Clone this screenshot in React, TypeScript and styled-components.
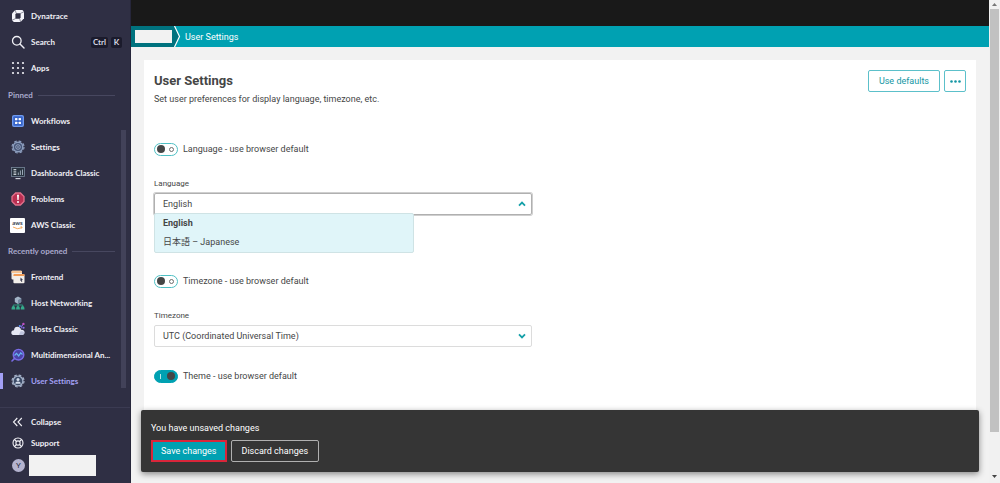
import React from 'react';
import styled, { createGlobalStyle } from 'styled-components';

const teal = '#00a1b2';

const Global = createGlobalStyle`
  *, *::before, *::after { box-sizing: border-box; }
  body { margin: 0; }
  body, button, select { font-family: Roboto, "Noto Sans CJK JP", sans-serif; }
`;

const Shell = styled.div`
  display: flex;
  min-height: 100vh;
  background: #f2f2f2;
  color: #454646;
  font-size: 9px;
`;

/* ---------- Sidebar ---------- */

const Sidebar = styled.aside`
  flex: 0 0 131px;
  display: flex;
  flex-direction: column;
  padding-top: 3px;
  background: #2f2f44;
  border-right: 1px solid #26263a;
`;

const NavLink = styled.a<{ $active?: boolean; $height?: number }>`
  display: flex;
  align-items: center;
  gap: 6px;
  height: ${(p) => p.$height ?? 26}px;
  padding: 0 8px 0 ${(p) => (p.$active ? 8 : 11)}px;
  border-left: ${(p) => (p.$active ? '3px solid #a3a0f5' : '0')};
  border-image: ${(p) =>
    p.$active
      ? 'linear-gradient(transparent 20%, #a3a0f5 20%, #a3a0f5 80%, transparent 80%) 1'
      : 'none'};
  color: ${(p) => (p.$active ? '#a3a0f5' : '#f0f0f5')};
  font-family: Lato, sans-serif;
  font-variant-ligatures: none;
  font-size: 8px;
  font-weight: 700;
  text-decoration: none;
  white-space: nowrap;
  svg { flex: none; }
`;

const Keys = styled.span`
  display: flex;
  gap: 3px;
  margin-left: auto;
`;

const Key = styled.kbd`
  padding: 0 2px;
  min-width: 11px;
  text-align: center;
  border-radius: 2px;
  background: #1b1b2c;
  color: #d5d5e2;
  font-family: inherit;
  line-height: 11px;
`;

const ScrollArea = styled.div`
  display: flex;
`;

const NavList = styled.nav`
  flex: 1;
  min-width: 0;
`;

const Track = styled.div`
  display: flex;
  flex: 0 0 5px;
  margin-right: 4px;
  padding: 48px 0 6px;
`;

const Thumb = styled.div`
  flex: 1;
  background: #424259;
`;

const NavGroup = styled.div`
  padding-bottom: 1px;
`;

const GroupTitle = styled.h2`
  display: flex;
  align-items: center;
  gap: 5px;
  height: 26px;
  margin: 0;
  padding: 0 6px 0 8px;
  color: #a9a9cc;
  font-family: Lato, sans-serif;
  font-size: 8px;
  font-weight: 700;
  white-space: nowrap;
  &::after {
    content: '';
    flex: 1;
    height: 1px;
    background: #47475f;
  }
`;

const SidebarFooter = styled.div`
  margin-top: auto;
  padding: 3px 0 7px;
  border-top: 1px solid #3b3b52;
`;

const Account = styled.div`
  display: flex;
  align-items: center;
  gap: 4px;
  padding: 2px 0 0 12px;
`;

const Avatar = styled.span`
  width: 13px;
  height: 13px;
  border-radius: 50%;
  background: #b4b3cf;
  color: #2f2f44;
  font-size: 8px;
  line-height: 13px;
  text-align: center;
`;

const AccountName = styled.span`
  width: 67px;
  height: 21px;
  background: #f2f2f2;
`;

/* ---------- Main area ---------- */

const Main = styled.main`
  flex: 1;
  min-width: 0;
  display: flex;
  flex-direction: column;
`;

const TopBar = styled.header`
  height: 26px;
  background: #191919;
`;

const Breadcrumbs = styled.nav`
  display: flex;
  align-items: center;
  height: 21px;
  background: ${teal};
  a { color: #fff; font-size: 9px; text-decoration: none; }
`;

const Crumb = styled.span`
  display: flex;
  align-items: center;
  height: 21px;
  padding-left: 4px;
  background: #00727e;
`;

const CrumbName = styled.span`
  width: 37px;
  height: 13px;
  background: #f2f2f2;
`;

const CrumbArrow = styled.svg`
  margin-right: 4px;
`;

const Content = styled.div`
  flex: 1;
  display: flex;
  flex-direction: column;
  padding: 13px 10px 11px;
`;

const Card = styled.section`
  flex: 1;
  margin: 0 3px;
  padding: 10px;
  background: #fff;
`;

const CardHeader = styled.div`
  display: flex;
  align-items: flex-start;
  gap: 4px;
  margin-bottom: 34px;
`;

const Heading = styled.div`
  flex: 1;
  padding-top: 1px;
`;

const Title = styled.h1`
  margin: 0;
  font-size: 13px;
  font-weight: 700;
  line-height: 20px;
`;

const Subtitle = styled.p`
  margin: 0;
  font-size: 9px;
  line-height: 16px;
`;

const Button = styled.button<{ $tone: 'outline' | 'primary' | 'dark' }>`
  display: flex;
  align-items: center;
  justify-content: center;
  height: 22px;
  padding: 0 10px;
  border: 1px solid ${(p) => (p.$tone === 'outline' ? '#5cc0ca' : '#b0b0b0')};
  border-radius: 2px;
  background: ${(p) => (p.$tone === 'outline' ? '#fff' : p.$tone === 'primary' ? teal : '#353535')};
  color: ${(p) => (p.$tone === 'outline' ? '#1496a4' : '#fff')};
  font-size: 9px;
`;

const SaveButton = styled(Button)`
  padding: 0 8px;
  border: 2px solid #d9263a;
  border-radius: 0;
`;

const MoreButton = styled(Button)`
  width: 22px;
  padding: 0;
`;

const ToggleRow = styled.label`
  display: flex;
  align-items: center;
  gap: 5px;
  height: 16px;
  font-size: 9px;
`;

const Toggle = styled.input`
  appearance: none;
  display: flex;
  align-items: center;
  justify-content: space-between;
  width: 24px;
  height: 13px;
  margin: 0;
  padding: 0 3px 0 2px;
  border: 1px solid #4fc0c4;
  border-radius: 7px;
  background: #fff;
  &::before {
    content: '';
    width: 8px;
    height: 8px;
    border-radius: 50%;
    background: #454646;
  }
  &::after {
    content: '';
    width: 5px;
    height: 5px;
    border: 1px solid #6d6d6d;
    border-radius: 50%;
  }
  &:checked {
    flex-direction: row-reverse;
    padding: 0 2px 0 5px;
    border-color: ${teal};
    background: ${teal};
  }
  &:checked::after {
    width: 1px;
    border: 0;
    border-radius: 0;
    background: #b9e6ea;
  }
`;

const Field = styled.div`
  position: relative;
  width: 378px;
  max-width: 100%;
  margin: 20px 0;
`;

const FieldLabel = styled.label`
  display: block;
  height: 16px;
  font-size: 8px;
  line-height: 14px;
`;

const SelectBox = styled.div<{ $open?: boolean }>`
  display: grid;
  align-items: center;
  border-radius: 2px;
  box-shadow: ${(p) => (p.$open ? '0 0 0 1px #cfcfcf' : 'none')};
  > * { grid-area: 1 / 1; }
  > svg { justify-self: end; margin-right: 6px; pointer-events: none; }
  select { border-color: ${(p) => (p.$open ? '#b0b0b0' : '#dcdcdc')}; }
`;

const Select = styled.select`
  appearance: none;
  width: 100%;
  height: 22px;
  padding: 0 8px;
  border: 1px solid;
  border-radius: 2px;
  background: #fff;
  color: #454646;
  font-size: 9px;
`;

const Group = styled.div<{ $space: number }>`
  padding-bottom: ${(p) => p.$space}px;
`;

const OptionList = styled.ul`
  position: absolute;
  top: 36px;
  left: 0;
  width: 260px;
  margin: 0;
  padding: 0;
  border: 1px solid #cfe3e5;
  border-radius: 2px;
  background: #e0f5f9;
  list-style: none;
`;

const OptionItem = styled.li`
  height: 19px;
  padding: 0 8px;
  font-size: 9px;
  line-height: 19px;
  &[aria-selected='true'] { font-weight: 700; }
`;

const SaveBar = styled.section`
  padding: 10px;
  border-radius: 2px;
  background: #353535;
  box-shadow: 0 2px 6px rgba(0, 0, 0, 0.45);
  color: #fff;
`;

const SaveText = styled.p`
  margin: 0 0 4px;
  font-size: 9px;
  line-height: 16px;
`;

const Actions = styled.div`
  display: flex;
  gap: 4px;
`;

/* ---------- Page scroll bar ---------- */

const PageScroll = styled.div`
  flex: 0 0 11px;
  display: flex;
  flex-direction: column;
  align-items: center;
  justify-content: space-between;
  background: #f1f1f1;
`;

const PageThumb = styled.div`
  flex: 1;
  width: 9px;
  margin-bottom: 40px;
  background: #c1c1c1;
`;

/* ---------- Icons ---------- */

const Svg = ({ children, size = 14 }: { children: React.ReactNode; size?: number }) => (
  <svg width={size} height={size} viewBox="0 0 14 14" fill="none" aria-hidden="true">
    {children}
  </svg>
);

const LogoIcon = () => (
  <Svg>
    <path d="M4.2 1h7.2L13 2.8v6.4L9.6 13H2.8L1 11.2V4.6z" fill="#f4f4fa" />
    <path d="M5.2 4.3h4.4v4.2l-.9 1.2H4.4V5.4z" fill="#2f2f44" />
    <path d="M4.2 1l1 3.3M13 2.8L9.6 4.3M9.6 13l-.9-3.3M1 11.2l3.4-1.5" stroke="#2f2f44" strokeWidth=".5" />
  </Svg>
);

const SearchIcon = () => (
  <Svg>
    <circle cx="5.8" cy="5.8" r="4.3" stroke="#f0f0f5" strokeWidth="1.3" />
    <path d="M9 9l4 4" stroke="#f0f0f5" strokeWidth="1.4" strokeLinecap="round" />
  </Svg>
);

const AppsIcon = () => (
  <Svg>
    {[2, 7, 12].map((y) => [2, 7, 12].map((x) => <circle key={`${x}-${y}`} cx={x} cy={y} r="1.1" fill="#f0f0f5" />))}
  </Svg>
);

const WorkflowsIcon = () => (
  <Svg>
    <rect x="1" y="1" width="12" height="12" rx="2" fill="#6f9bf0" />
    <rect x="2.3" y="2.3" width="9.4" height="9.4" rx="1" fill="#3764c8" />
    {[4, 7.8].map((y) => [4, 7.8].map((x) => <rect key={`${x}-${y}`} x={x} y={y} width="2.2" height="2.2" rx=".5" fill="#fff" />))}
    <path d="M6.2 5.1h1.6M6.2 8.9h1.6" stroke="#fff" strokeWidth=".6" />
  </Svg>
);

const SettingsIcon = () => (
  <Svg>
    <circle cx="7" cy="7" r="6" stroke="#8c9dbd" strokeWidth="1.2" strokeDasharray="2.7 2.01" />
    <circle cx="7" cy="7" r="4.8" fill="#465577" stroke="#8c9dbd" strokeWidth="1.4" />
    <circle cx="7" cy="7" r="2.3" stroke="#a7b5d0" strokeWidth=".8" />
    <circle cx="7" cy="7" r=".8" fill="#a7b5d0" />
  </Svg>
);

const DashboardIcon = () => (
  <Svg>
    <rect x=".5" y="1.5" width="13" height="9" fill="#29333f" stroke="#77879a" strokeWidth=".8" />
    <path d="M2.5 3.5h2.8M2.5 5.2h2.8M2.5 7h2.8M2.5 8.5h2.8" stroke="#d6dbe2" strokeWidth=".9" />
    <path d="M7.3 9V6.5M9.4 9V4.5M11.5 9V3.5" stroke="#99a7b5" strokeWidth="1" />
    <path d="M4.5 12.6h5" stroke="#d6dbe2" strokeWidth="1.1" />
  </Svg>
);

const ProblemsIcon = () => (
  <Svg>
    <path d="M4.6 1h4.8L13 4.6v4.8L9.4 13H4.6L1 9.4V4.6z" fill="#b92f52" stroke="#e2728c" strokeWidth="1.3" />
    <path d="M6 2.8h2L7.6 8H6.4z" fill="#fff" />
    <circle cx="7" cy="10" r="1" fill="#fff" />
  </Svg>
);

const AwsLogo = styled.span`
  display: flex;
  flex-direction: column;
  align-items: center;
  justify-content: center;
  width: 15px;
  height: 15px;
  margin: 0 0 0 -1px;
  border-radius: 1px;
  background: #fff;
  color: #35404e;
  font-size: 6px;
  line-height: 6px;
`;

const AwsIcon = () => (
  <AwsLogo>
    aws
    <svg width="11" height="4" viewBox="0 0 11 4" fill="none" aria-hidden="true">
      <path d="M1 1q4.5 3 8.6.8M8.6.8l1.5.2-.5 1.4" stroke="#f5a04a" strokeWidth=".9" />
    </svg>
  </AwsLogo>
);

const FrontendIcon = () => (
  <Svg>
    <rect x=".5" y=".8" width="10.5" height="8.8" rx="1" fill="#f2ede6" />
    <path d="M.5 3V1.8q0-1 1-1h8.5q1 0 1 1V3z" fill="#f6c596" />
    <rect x="2.4" y="4" width="11.1" height="9.2" rx="1" fill="#f3efeb" />
    <path d="M2.4 6V5q0-1 1-1h9.1q1 0 1 1v1z" fill="#f19a55" />
    <path d="M9.6 7.5l2.4 2.6-1.2.1.5 1.6-.9.2-.4-1.5-.8.6z" fill="#3b3b50" />
  </Svg>
);

const NetworkIcon = () => (
  <Svg>
    <path d="M7 .6l3.2 1.7v3.8L7 7.9 3.8 6.1V2.3z" fill="#a3b4c7" />
    <path d="M7 4.1l3.2-1.8v3.8L7 7.9z" fill="#71879f" />
    <path d="M7 8v2.5M2.3 10.5V9h9.4v1.5" stroke="#2f9f83" strokeWidth=".9" />
    <path d="M.5 13.4q0-3.4 1.9-3.4t1.9 3.4zM5.1 13.4q0-3.4 1.9-3.4t1.9 3.4zM9.7 13.4q0-3.4 1.9-3.4t1.9 3.4z" fill="#35ab8c" />
  </Svg>
);

const HostsIcon = () => (
  <Svg>
    <path d="M3 13q-2.7 0-2.7-2.3T3 8.2q.3-3.4 3.4-3.4t3.6 2.9q3.5-.2 3.5 2.6T10.6 13z" fill="#e6e8f4" />
    <path d="M9.6 9.3q2.2-.5 3.8.9-.1 2.8-2.7 2.8H7.8z" fill="#bfc5de" />
    <path d="M8.8 4.2h2v2.2M10.8 4.2L12.6 2" stroke="#8a6de8" strokeWidth="1" />
    <circle cx="8.7" cy="4" r="1" fill="#5b8def" />
    <circle cx="12.4" cy="1.9" r="1.2" fill="#c04fc2" />
    <circle cx="12.6" cy="5.8" r="1" fill="#8a6de8" />
  </Svg>
);

const AnalysisIcon = () => (
  <Svg>
    <path d="M3.6 10.4L1 13" stroke="#7a6be6" strokeWidth="1.6" strokeLinecap="round" />
    <circle cx="7.5" cy="6.7" r="5.3" fill="#4a44a5" stroke="#7a6be6" strokeWidth="1.4" />
    <path d="M3.5 7.5l2-2.2 2.2 2.6 2-3 1.8 1.6" stroke="#67b4f2" strokeWidth="1.2" />
  </Svg>
);

const UserSettingsIcon = () => (
  <Svg>
    <circle cx="7" cy="7" r="6" stroke="#a4b1c8" strokeWidth="1.2" strokeDasharray="2.7 2.01" />
    <circle cx="7" cy="7" r="4.9" fill="#3b4a66" stroke="#a4b1c8" strokeWidth="1.3" />
    <circle cx="7" cy="5.4" r="1.5" fill="#d3dbea" />
    <path d="M4.3 9.8q0-2.4 2.7-2.4t2.7 2.4z" fill="#d3dbea" />
  </Svg>
);

const CollapseIcon = () => (
  <Svg>
    <path d="M6.3 3L2.5 7l3.8 4M10.8 3L7 7l3.8 4" stroke="#f0f0f5" strokeWidth="1.1" />
  </Svg>
);

const SupportIcon = () => (
  <Svg>
    <circle cx="7" cy="7" r="5" stroke="#f0f0f5" strokeWidth="1.1" />
    <circle cx="7" cy="7" r="2.1" stroke="#f0f0f5" strokeWidth="1.1" />
    <path d="M3.5 3.5l2 2M10.5 3.5l-2 2M3.5 10.5l2-2M10.5 10.5l-2-2" stroke="#f0f0f5" strokeWidth="1.1" />
  </Svg>
);

const Chevron = ({ up }: { up?: boolean }) => (
  <svg width="8" height="6" viewBox="0 0 8 6" fill="none" aria-hidden="true">
    <path d={up ? 'M1 4.6l3-3 3 3' : 'M1 1.4l3 3 3-3'} stroke="#14a0a8" strokeWidth="1.8" />
  </svg>
);

const pinned = [
  { name: 'Workflows', icon: <WorkflowsIcon /> },
  { name: 'Settings', icon: <SettingsIcon /> },
  { name: 'Dashboards Classic', icon: <DashboardIcon /> },
  { name: 'Problems', icon: <ProblemsIcon /> },
  { name: 'AWS Classic', icon: <AwsIcon /> },
];

const recent = [
  { name: 'Frontend', icon: <FrontendIcon /> },
  { name: 'Host Networking', icon: <NetworkIcon /> },
  { name: 'Hosts Classic', icon: <HostsIcon /> },
  { name: 'Multidimensional An...', icon: <AnalysisIcon /> },
  { name: 'User Settings', icon: <UserSettingsIcon />, active: true },
];

const NavItem = ({ name, icon, active }: { name: string; icon: React.ReactNode; active?: boolean }) => (
  <NavLink href="#" $active={active}>
    {icon}
    {name}
  </NavLink>
);

export default function App() {
  return (
    <Shell>
      <Global />
      <Sidebar>
        <NavGroup>
          <NavLink href="#"><LogoIcon />Dynatrace</NavLink>
          <NavLink href="#">
            <SearchIcon />Search
            <Keys><Key>Ctrl</Key><Key>K</Key></Keys>
          </NavLink>
          <NavLink href="#"><AppsIcon />Apps</NavLink>
        </NavGroup>
        <ScrollArea>
          <NavList>
            <GroupTitle>Pinned</GroupTitle>
            {pinned.map((item) => <NavItem key={item.name} {...item} />)}
            <GroupTitle>Recently opened</GroupTitle>
            {recent.map((item) => <NavItem key={item.name} {...item} />)}
          </NavList>
          <Track><Thumb /></Track>
        </ScrollArea>
        <SidebarFooter>
          <NavLink href="#" $height={21}><CollapseIcon />Collapse</NavLink>
          <NavLink href="#" $height={21}><SupportIcon />Support</NavLink>
          <Account><Avatar>Y</Avatar><AccountName /></Account>
        </SidebarFooter>
      </Sidebar>

      <Main>
        <TopBar />
        <Breadcrumbs>
          <Crumb><CrumbName /></Crumb>
          <CrumbArrow width="9" height="21" viewBox="0 0 9 21" fill="none" aria-hidden="true">
            <path d="M0 0h2.5l5 10.5-5 10.5H0z" fill="#00727e" />
            <path d="M2.5 0l5 10.5-5 10.5" stroke="#fff" strokeWidth="1.2" />
          </CrumbArrow>
          <a href="#">User Settings</a>
        </Breadcrumbs>
        <Content>
          <Card>
            <CardHeader>
              <Heading>
                <Title>User Settings</Title>
                <Subtitle>Set user preferences for display language, timezone, etc.</Subtitle>
              </Heading>
              <Button $tone="outline">Use defaults</Button>
              <MoreButton $tone="outline" aria-label="More">
                <svg width="11" height="3" viewBox="0 0 11 3" fill="#1496a4" aria-hidden="true">
                  <circle cx="1.5" cy="1.5" r="1.3" />
                  <circle cx="5.5" cy="1.5" r="1.3" />
                  <circle cx="9.5" cy="1.5" r="1.3" />
                </svg>
              </MoreButton>
            </CardHeader>

            <Group $space={38}>
              <ToggleRow><Toggle type="checkbox" />Language - use browser default</ToggleRow>
              <Field>
                <FieldLabel htmlFor="language">Language</FieldLabel>
                <SelectBox $open>
                  <Select id="language" defaultValue="en">
                    <option value="en">English</option>
                    <option value="ja">日本語 – Japanese</option>
                  </Select>
                  <Chevron up />
                </SelectBox>
                <OptionList role="listbox" aria-label="Language">
                  <OptionItem role="option" aria-selected="true">English</OptionItem>
                  <OptionItem role="option" aria-selected="false">日本語 – Japanese</OptionItem>
                </OptionList>
              </Field>
            </Group>

            <Group $space={1}>
              <ToggleRow><Toggle type="checkbox" />Timezone - use browser default</ToggleRow>
              <Field>
                <FieldLabel htmlFor="timezone">Timezone</FieldLabel>
                <SelectBox>
                  <Select id="timezone" defaultValue="utc">
                    <option value="utc">UTC (Coordinated Universal Time)</option>
                  </Select>
                  <Chevron />
                </SelectBox>
              </Field>
            </Group>
            <ToggleRow><Toggle type="checkbox" defaultChecked />Theme - use browser default</ToggleRow>
          </Card>

          <SaveBar>
            <SaveText>You have unsaved changes</SaveText>
            <Actions>
              <SaveButton $tone="primary">Save changes</SaveButton>
              <Button $tone="dark">Discard changes</Button>
            </Actions>
          </SaveBar>
        </Content>
      </Main>

      <PageScroll>
        <svg width="9" height="9" viewBox="0 0 9 9" fill="#777" aria-hidden="true"><path d="M2 6l2.5-3L7 6z" /></svg>
        <PageThumb />
        <svg width="9" height="11" viewBox="0 0 9 11" fill="#444" aria-hidden="true"><path d="M2 3l2.5 3L7 3z" /></svg>
      </PageScroll>
    </Shell>
  );
}
